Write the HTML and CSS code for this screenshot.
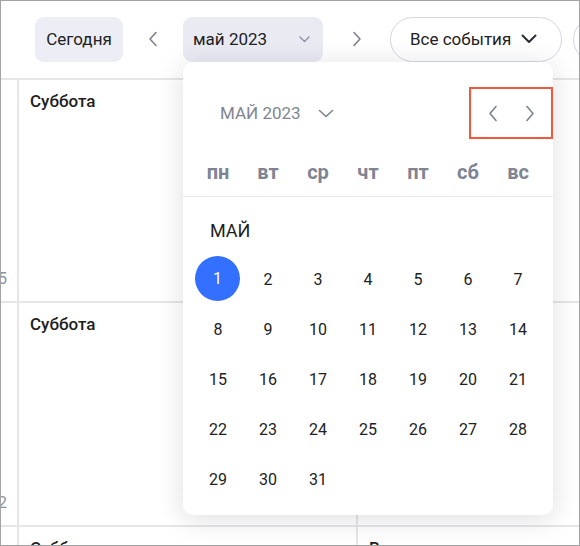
FILE: index.html
```html
<!DOCTYPE html>
<html lang="ru">
<head>
  <meta charset="UTF-8">
  <meta name="viewport" content="width=device-width, initial-scale=1.0"/>
  <title>Календарь</title>
  <link rel="stylesheet" href="styles.css">
</head>
<body>
  <div class="frame">

    <div class="toolbar">
      <button class="btn-today">Сегодня</button>
      <button class="nav nav-prev">
        <svg width="10" height="16" viewBox="0 0 10 16"><path d="M8 1.5L2 8l6 6.5" fill="none" stroke="#7c818c" stroke-width="1.6" stroke-linecap="round" stroke-linejoin="round"/></svg>
      </button>
      <button class="month-select">
        <span>май 2023</span>
        <svg width="11" height="7" viewBox="0 0 11 7"><path d="M1 1l4.5 4.5L10 1" fill="none" stroke="#8a8fa0" stroke-width="1.3" stroke-linecap="round" stroke-linejoin="round"/></svg>
      </button>
      <button class="nav nav-next">
        <svg width="10" height="16" viewBox="0 0 10 16"><path d="M2 1.5L8 8l-6 6.5" fill="none" stroke="#7c818c" stroke-width="1.6" stroke-linecap="round" stroke-linejoin="round"/></svg>
      </button>
      <button class="pill">
        <span>Все события</span>
        <svg width="16" height="10" viewBox="0 0 16 10"><path d="M1.5 1.5L8 8l6.5-6.5" fill="none" stroke="#2a2d34" stroke-width="2" stroke-linecap="round" stroke-linejoin="round"/></svg>
      </button>
      <button class="pill pill-more">Фильтр</button>
    </div>

    <div class="week">
      <div class="gutter"><span>25</span></div>
      <div class="cell"><span class="day-name">Суббота</span></div>
      <div class="cell"></div>
      <div class="gutter"><span>22</span></div>
      <div class="cell"><span class="day-name">Суббота</span></div>
      <div class="cell"></div>
      <div class="gutter"></div>
      <div class="cell"><span class="day-name">Суббота</span></div>
      <div class="cell"><span class="day-name">Воскресенье</span></div>
    </div>

    <!-- выпадающий календарь месяца -->
    <div class="picker">
      <div class="picker-head">
        <div class="picker-title">
          <span>Май 2023</span>
          <svg width="16" height="9" viewBox="0 0 16 9"><path d="M1.5 1.5L8 7.5l6.5-6" fill="none" stroke="#7c828e" stroke-width="1.6" stroke-linecap="round" stroke-linejoin="round"/></svg>
        </div>
        <div class="picker-nav">
          <svg width="10" height="17" viewBox="0 0 10 17"><path d="M8 1.5L2 8.5l6 7" fill="none" stroke="#7c828e" stroke-width="1.6" stroke-linecap="round" stroke-linejoin="round"/></svg>
          <svg width="10" height="17" viewBox="0 0 10 17"><path d="M2 1.5L8 8.5l-6 7" fill="none" stroke="#7c828e" stroke-width="1.6" stroke-linecap="round" stroke-linejoin="round"/></svg>
        </div>
      </div>

      <div class="weekdays">
        <span>пн</span><span>вт</span><span>ср</span><span>чт</span><span>пт</span><span>сб</span><span>вс</span>
      </div>

      <div class="month-label">Май</div>

      <div class="days" id="days"></div>
    </div>

  </div>

  <script>
    const days = document.getElementById("days");
    for (let d = 1; d <= 31; d++) {
      const el = document.createElement("span");
      el.className = d === 1 ? "day selected" : "day";
      el.innerText = d;
      days.appendChild(el);
    }
  </script>
</body>
</html>
```

FILE: styles.css
```css
body {
  margin: 0;
  font-family: Roboto, "Noto Sans", sans-serif;
  background: #fff;
}
button {
  font-family: inherit;
  cursor: pointer;
  box-sizing: border-box;
}
.frame {
  position: relative;
  width: 580px;
  height: 546px;
  box-sizing: border-box;
  border: 1px solid #a3a3a3;
  overflow: hidden;
  background: #fff;
}

/* toolbar */
.toolbar {
  display: flex;
  align-items: center;
  height: 77px;
  box-sizing: border-box;
  padding: 15px 0 16px 34px;
  white-space: nowrap;
}
.toolbar button {
  height: 45px;
  border: none;
  font-size: 17px;
  color: #222;
  flex-shrink: 0;
}
.btn-today {
  width: 88px;
  padding: 0;
  background: #ecedf5;
  border-radius: 9px;
}
.nav {
  width: 60px;
  background: none;
  display: flex;
  align-items: center;
  justify-content: center;
}
.nav-next {
  width: 67px;
}
.month-select {
  width: 140px;
  padding: 0 13px 0 10px;
  background: #e9eaf2;
  border-radius: 9px;
  display: flex;
  align-items: center;
  justify-content: space-between;
}
.pill {
  display: flex;
  align-items: center;
  justify-content: space-between;
  padding: 0 24px 0 19px;
  width: 172px;
  background: #fff;
  border: 1px solid #d3d7e2 !important;
  border-radius: 23px;
}
.pill-more {
  margin-left: 11px;
  width: 120px;
}

/* week grid */
.week {
  display: grid;
  grid-template-columns: 16px 337px 1fr;
  grid-template-rows: 221px 222px 1fr;
  gap: 2px;
  height: 470px;
  background: #e6e6e8;
  border-top: 2px solid #e6e6e8;
}
.gutter, .cell {
  background: #fff;
}
.gutter {
  display: flex;
  justify-content: flex-end;
  align-items: flex-end;
  padding: 0 10px 13px 0;
  overflow: hidden;
  font-size: 16px;
  color: #8a93a6;
}
.cell {
  padding: 11px 11px;
}
.day-name {
  font-size: 17px;
  font-weight: 500;
  color: #1e1e1e;
}

/* month picker */
.picker {
  position: absolute;
  left: 182px;
  top: 61px;
  width: 370px;
  height: 453px;
  background: #fff;
  border-radius: 10px;
  box-shadow: 0 4px 28px rgba(20, 20, 40, 0.14);
}
.picker-head {
  display: flex;
  align-items: center;
  justify-content: space-between;
  padding-top: 25px;
}
.picker-title {
  display: flex;
  align-items: center;
  gap: 17px;
  padding-left: 37px;
  font-size: 17px;
  color: #80868f;
  text-transform: uppercase;
}
.picker-nav {
  width: 84px;
  height: 52px;
  box-sizing: border-box;
  border: 2px solid #f4583a;
  display: flex;
  align-items: center;
  gap: 27px;
  padding-left: 17px;
}
.weekdays {
  display: grid;
  grid-template-columns: repeat(7, 50px);
  padding: 18px 10px 9px;
  border-bottom: 1px solid #e8e8f0;
}
.weekdays span {
  text-align: center;
  line-height: 30px;
  font-size: 20px;
  font-weight: 700;
  color: #7e8494;
}
.month-label {
  padding: 22px 0 0 27px;
  line-height: 24px;
  font-size: 18px;
  color: #1e1e1e;
  text-transform: uppercase;
}
.days {
  display: grid;
  grid-template-columns: repeat(7, 50px);
  grid-auto-rows: 50px;
  padding: 11px 10px 0;
}
.day {
  display: flex;
  align-items: center;
  justify-content: center;
  font-size: 16px;
  color: #222;
}
.day.selected {
  width: 45px;
  height: 45px;
  margin: 2px 0 0 2px;
  border-radius: 50%;
  background: #3370ff;
  color: #fff;
}
```
